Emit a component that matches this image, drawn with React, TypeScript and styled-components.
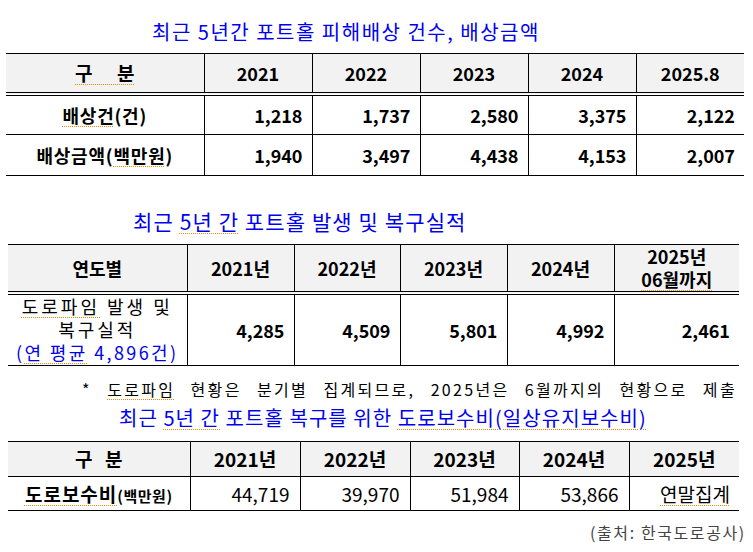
import React from "react";
import styled, { createGlobalStyle } from "styled-components";

const GlobalStyle = createGlobalStyle`
  html, body { margin: 0; padding: 0; background: #fff; }
  body {
    font-family: "Noto Sans CJK KR", "Noto Sans", sans-serif;
    color: #000;
  }
`;

const Page = styled.div`
  width: 753px;
  height: 552px;
  overflow: hidden;
  display: flex;
  flex-direction: column;
  align-items: flex-start;
`;

const Title = styled.h2<{ $top: number; $left: number; $size: number; $track: number }>`
  margin: ${(p) => p.$top}px 0 0 ${(p) => p.$left}px;
  font-size: ${(p) => p.$size}px;
  letter-spacing: ${(p) => p.$track}px;
  line-height: 24px;
  font-weight: 400;
  color: #0000f0;
  white-space: nowrap;
`;

const Marked = styled.span`
  text-decoration: underline dotted #f08a00;
  text-decoration-thickness: 1px;
  text-underline-offset: 3px;
`;

const Table = styled.table<{ $top: number; $left: number; $width: number }>`
  margin: ${(p) => p.$top}px 0 0 ${(p) => p.$left}px;
  width: ${(p) => p.$width}px;
  border-collapse: collapse;
  table-layout: fixed;
  border-top: 1px solid #000;
  border-bottom: 1px solid #000;
`;

const Col = styled.col<{ $w: number }>`
  width: ${(p) => p.$w}px;
`;

const HeadRow = styled.tr<{ $h: number }>`
  height: ${(p) => p.$h}px;
  background: #f2f2f2;
`;

const HeadCell = styled.th<{ $double?: boolean; $size: number }>`
  padding: 0;
  font-size: ${(p) => p.$size}px;
  font-weight: 700;
  line-height: 22px;
  text-align: center;
  vertical-align: middle;
  white-space: nowrap;
  border-bottom: ${(p) => (p.$double ? "4px double #000" : "1px solid #000")};
  & + & {
    border-left: 1px solid #000;
  }
`;

const HeadLine = styled.span`
  display: block;
  line-height: 23px;
`;

const Spaced = styled.span<{ $gap: number }>`
  word-spacing: ${(p) => p.$gap}px;
`;

const BodyRow = styled.tr<{ $h: number }>`
  height: ${(p) => p.$h}px;
  & + & > td {
    border-top: 1px solid #000;
  }
`;

const LabelCell = styled.td<{ $size: number; $weight: number; $track?: number }>`
  padding: 0;
  font-size: ${(p) => p.$size}px;
  font-weight: ${(p) => p.$weight};
  letter-spacing: ${(p) => p.$track ?? 0}px;
  text-align: center;
  vertical-align: middle;
  white-space: nowrap;
`;

const NumCell = styled.td<{ $size: number; $weight: number; $pad: number }>`
  padding: 0 ${(p) => p.$pad}px 0 0;
  font-size: ${(p) => p.$size}px;
  font-weight: ${(p) => p.$weight};
  text-align: right;
  vertical-align: middle;
  white-space: nowrap;
  border-left: 1px solid #000;
`;

const Line = styled.span<{ $blue?: boolean }>`
  display: block;
  line-height: 23px;
  letter-spacing: ${(p) => (p.$blue ? 2.4 : 3)}px;
  color: ${(p) => (p.$blue ? "#0000f0" : "#000")};
`;

const Small = styled.span`
  font-size: 15px;
  letter-spacing: 0.5px;
`;

const Note = styled.p`
  margin: 12px 0 0 82px;
  width: 655px;
  font-size: 16px;
  line-height: 22px;
  letter-spacing: 2.3px;
  white-space: nowrap;
  display: flex;
  justify-content: space-between;
`;

const Source = styled.p`
  margin: 11px 0 0 590px;
  font-size: 16px;
  line-height: 20px;
  letter-spacing: 1.6px;
  color: #444;
  white-space: nowrap;
`;

const table1 = {
  years: ["2021", "2022", "2023", "2024", "2025.8"],
  rows: [
    { label: <><Marked>배상건</Marked>(건)</>, values: ["1,218", "1,737", "2,580", "3,375", "2,122"] },
    { label: <>배상금액(<Marked>백만원</Marked>)</>, values: ["1,940", "3,497", "4,438", "4,153", "2,007"] },
  ],
};

const table2Years = ["2021년", "2022년", "2023년", "2024년"];
const table2Values = ["4,285", "4,509", "5,801", "4,992", "2,461"];
const table3Years = ["2021년", "2022년", "2023년", "2024년", "2025년"];
const table3Values = ["44,719", "39,970", "51,984", "53,866"];
const noteWords = ["*", <Marked key="m">도로파임</Marked>, "현황은", "분기별", "집계되므로,", "2025년은", "6월까지의", "현황으로", "제출"];

export default function App() {
  return (
    <>
      <GlobalStyle />
      <Page>
        <Title $top={20} $left={152} $size={20} $track={1.5}>
          최근 5년간 포트홀 피해배상 건수, 배상금액
        </Title>
        <Table $top={9} $left={6} $width={738}>
          <colgroup>
            <Col $w={198} />
            {table1.years.map((y) => (
              <Col key={y} $w={108} />
            ))}
          </colgroup>
          <thead>
            <HeadRow $h={40}>
              <HeadCell $double $size={19}>
                <Marked>
                  <Spaced $gap={20}>구 분</Spaced>
                </Marked>
              </HeadCell>
              {table1.years.map((y) => (
                <HeadCell key={y} $double $size={18}>
                  {y}
                </HeadCell>
              ))}
            </HeadRow>
          </thead>
          <tbody>
            {table1.rows.map((r, i) => (
              <BodyRow key={i} $h={41}>
                <LabelCell $size={18} $weight={700} $track={0.8}>
                  {r.label}
                </LabelCell>
                {r.values.map((v, j) => (
                  <NumCell key={j} $size={18} $weight={700} $pad={9}>
                    {v}
                  </NumCell>
                ))}
              </BodyRow>
            ))}
          </tbody>
        </Table>

        <Title $top={33} $left={133} $size={21} $track={1.1}>
          최근 <Marked>5년 간</Marked> 포트홀 발생 및 복구실적
        </Title>
        <Table $top={11} $left={8} $width={731}>
          <colgroup>
            <Col $w={179} />
            <Col $w={107} />
            <Col $w={106} />
            <Col $w={107} />
            <Col $w={107} />
            <Col $w={125} />
          </colgroup>
          <thead>
            <HeadRow $h={47}>
              <HeadCell $double $size={18}>연도별</HeadCell>
              {table2Years.map((y) => (
                <HeadCell key={y} $double $size={18}>
                  {y}
                </HeadCell>
              ))}
              <HeadCell $double $size={18}>
                <HeadLine>2025년</HeadLine>
                <HeadLine>
                  <Marked>06월까지</Marked>
                </HeadLine>
              </HeadCell>
            </HeadRow>
          </thead>
          <tbody>
            <BodyRow $h={72}>
              <LabelCell $size={18} $weight={400}>
                <Line>
                  <Marked>도로파임</Marked> 발생 및
                </Line>
                <Line>복구실적</Line>
                <Line $blue>
                  (<Marked>연 평균</Marked> 4,896건)
                </Line>
              </LabelCell>
              {table2Values.map((v, j) => (
                <NumCell key={j} $size={18} $weight={700} $pad={9}>
                  {v}
                </NumCell>
              ))}
            </BodyRow>
          </tbody>
        </Table>

        <Note>
          {noteWords.map((w, i) => (
            <span key={i}>{w}</span>
          ))}
        </Note>

        <Title $top={6} $left={119} $size={20} $track={1.05}>
          최근 <Marked>5년 간</Marked> 포트홀 복구를 위한 <Marked>도로보수비(일상유지보수비)</Marked>
        </Title>
        <Table $top={11} $left={8} $width={731}>
          <colgroup>
            <Col $w={182} />
            <Col $w={110} />
            <Col $w={110} />
            <Col $w={109} />
            <Col $w={110} />
            <Col $w={110} />
          </colgroup>
          <thead>
            <HeadRow $h={35}>
              <HeadCell $size={19}>
                <Spaced $gap={8}>구 분</Spaced>
              </HeadCell>
              {table3Years.map((y) => (
                <HeadCell key={y} $size={19}>
                  {y}
                </HeadCell>
              ))}
            </HeadRow>
          </thead>
          <tbody>
            <BodyRow $h={34}>
              <LabelCell $size={19} $weight={700} $track={1}>
                <Marked>도로보수비</Marked>
                <Small>(백만원)</Small>
              </LabelCell>
              {table3Values.map((v, j) => (
                <NumCell key={j} $size={19} $weight={400} $pad={10}>
                  {v}
                </NumCell>
              ))}
              <NumCell $size={19} $weight={400} $pad={9}>
                <Marked>연말집계</Marked>
              </NumCell>
            </BodyRow>
          </tbody>
        </Table>

        <Source>(출처: 한국도로공사)</Source>
      </Page>
    </>
  );
}
